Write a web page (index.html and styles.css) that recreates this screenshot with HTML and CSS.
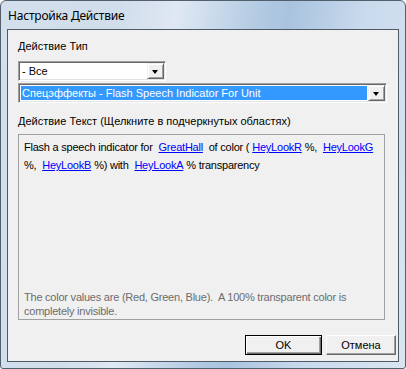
FILE: index.html
```html
<!DOCTYPE html>
<html lang="ru">

<head>
    <meta charset="UTF-8">
    <title>Настройка Действие</title>
    <link rel="stylesheet" href="styles.css">
</head>

<body>
    <div class="window">
        <div class="titlebar">Настройка Действие</div>

        <div class="client">
            <div class="label">Действие Тип</div>
            <div class="combo combo-short">
                <span class="combo-value">- Все</span>
                <span class="combo-arrow"></span>
            </div>
            <div class="combo combo-wide">
                <span class="combo-value selected">Спецэффекты - Flash Speech Indicator For Unit</span>
                <span class="combo-arrow"></span>
            </div>

            <div class="label label-text">Действие Текст (Щелкните в подчеркнутых областях)</div>
            <div class="text-panel">
                <p class="action-text">
                    Flash a speech indicator for <a href="#">GreatHall</a> of color (<a href="#">HeyLookR</a>%, <a href="#">HeyLookG</a><br>
                    %, <a href="#">HeyLookB</a>%) with <a href="#">HeyLookA</a>% transparency
                </p>
                <p class="note">The color values are (Red, Green, Blue).&nbsp; A 100% transparent color is completely invisible.</p>
            </div>

            <div class="buttons">
                <button class="btn btn-default">OK</button>
                <button class="btn btn-cancel">Отмена</button>
            </div>
        </div>
    </div>
</body>

</html>
```

FILE: styles.css
```css
* {
    box-sizing: border-box;
}

body {
    margin: 0;
    padding: 0;
    font-family: 'Liberation Sans', Arial, sans-serif;
    font-size: 11px;
    color: #000;
    background: #fff;
}

/* Рамка окна */
.window {
    width: 406px;
    height: 369px;
    display: flex;
    flex-direction: column;
    padding: 0 6px 6px 6px;
    border: 1px solid #52606e;
    border-radius: 6px 6px 3px 3px;
    background: linear-gradient(100deg, #d3dfec 0%, #d0ddeb 25%, #dfe8f3 38%, #b3cbe3 55%, #a9c3df 62%, #c9daed 78%, #dae5f1 100%);
}

.titlebar {
    height: 28px;
    padding-left: 1px;
    line-height: 29px;
    font-family: 'Noto Sans', 'Open Sans', sans-serif;
    font-size: 12px;
    letter-spacing: -0.2px;
    color: #000;
}

.client {
    flex: 1;
    display: flex;
    flex-direction: column;
    padding: 0 0 0 10px;
    border: 1px solid #4e5a66;
    background-color: #f0f0f0;
}

.label {
    margin-top: 10px;
    height: 13px;
    line-height: 13px;
}

.label-text {
    margin-top: 12px;
}

/* Выпадающие списки */
.combo {
    display: flex;
    height: 20px;
    padding: 2px;
    background-color: #fff;
    border: 1px solid #a0a0a0;
    border-right-color: #fff;
    border-bottom-color: #fff;
    box-shadow: inset 1px 1px 0 #696969, inset -1px -1px 0 #e3e3e3;
}

.combo-short {
    width: 148px;
    margin-top: 8px;
}

.combo-wide {
    width: 369px;
    margin-top: 2px;
}

.combo-value {
    flex: 1;
    padding-left: 1px;
    line-height: 14px;
    white-space: nowrap;
}

.combo-value.selected {
    background-color: #3399ff;
    color: #fff;
    margin-right: 1px;
}

.combo-arrow {
    position: relative;
    width: 17px;
    margin: -1px -1px -1px 0;
    background-color: #f0f0f0;
    border: 1px solid #f0f0f0;
    border-right-color: #696969;
    border-bottom-color: #696969;
    box-shadow: inset 1px 1px 0 #fff, inset -1px -1px 0 #a0a0a0;
}

.combo-arrow::after {
    content: "";
    position: absolute;
    left: 4px;
    top: 6px;
    border-left: 3.5px solid transparent;
    border-right: 3.5px solid transparent;
    border-top: 4px solid #000;
}

/* Панель с текстом действия */
.text-panel {
    width: 367px;
    height: 186px;
    margin-top: 6px;
    padding: 3px 5px 1px 5px;
    display: flex;
    flex-direction: column;
    justify-content: space-between;
    border: 1px solid #a0a0a0;
    letter-spacing: -0.23px;
}

.action-text {
    margin: 0;
    line-height: 18px;
    white-space: nowrap;
}

.action-text a {
    color: #0000ff;
    text-decoration: underline;
    margin: 0 3px;
}

.note {
    margin: 0;
    line-height: 14px;
    color: #6d6d6d;
}

/* Кнопки */
.buttons {
    display: flex;
    justify-content: flex-end;
    gap: 4px;
    margin-top: 15px;
    padding-right: 2px;
}

.btn {
    height: 20px;
    padding: 0;
    font-family: 'Liberation Sans', Arial, sans-serif;
    font-size: 11px;
    color: #000;
    background-color: #f0f0f0;
    border: 1px solid #fff;
    border-right-color: #696969;
    border-bottom-color: #696969;
    box-shadow: inset -1px -1px 0 #a0a0a0;
}

.btn-default {
    width: 77px;
    border: 1px solid #000;
    box-shadow: inset 1px 1px 0 #fff, inset -1px -1px 0 #696969, inset -2px -2px 0 #a0a0a0;
}

.btn-cancel {
    width: 70px;
}
```
